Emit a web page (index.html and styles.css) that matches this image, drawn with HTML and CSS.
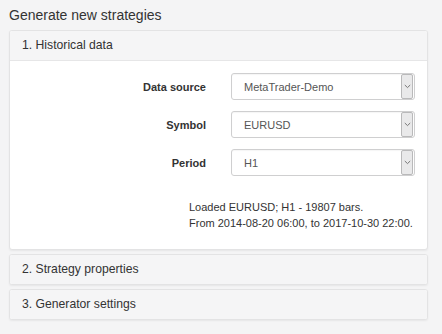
FILE: index.html
```html
<!DOCTYPE html>
<html>
<head>
<meta charset="utf-8">
<link rel="stylesheet" href="styles.css">
</head>
<body>
<div class="page">
  <h1 class="title">Generate new strategies</h1>
  <div class="panel">
    <div class="panel-head">1. Historical data</div>
    <div class="panel-body">
      <div class="form">
        <div class="label">Data source</div>
        <div class="select"><span class="value">MetaTrader-Demo</span><span class="arrow"><svg width="7" height="5" viewBox="0 0 7 5"><path d="M0.8 1 L3.5 3.6 L6.2 1" fill="none" stroke="#777" stroke-width="1"/></svg></span></div>
        <div class="label">Symbol</div>
        <div class="select"><span class="value">EURUSD</span><span class="arrow"><svg width="7" height="5" viewBox="0 0 7 5"><path d="M0.8 1 L3.5 3.6 L6.2 1" fill="none" stroke="#777" stroke-width="1"/></svg></span></div>
        <div class="label">Period</div>
        <div class="select"><span class="value">H1</span><span class="arrow"><svg width="7" height="5" viewBox="0 0 7 5"><path d="M0.8 1 L3.5 3.6 L6.2 1" fill="none" stroke="#777" stroke-width="1"/></svg></span></div>
      </div>
      <div class="info">
        <div>Loaded EURUSD; H1 - 19807 bars.</div>
        <div>From 2014-08-20 06:00, to 2017-10-30 22:00.</div>
      </div>
    </div>
  </div>
  <div class="panel">
    <div class="panel-head closed">2. Strategy properties</div>
  </div>
  <div class="panel">
    <div class="panel-head closed">3. Generator settings</div>
  </div>
</div>
</body>
</html>
```

FILE: styles.css
```css
html, body {
  margin: 0;
  padding: 0;
  background: #f4f4f5;
  font-family: "Liberation Sans", Arial, sans-serif;
  color: #333;
}
.page {
  width: 419px;
  padding: 6px 0 0 9px;
}
.title {
  margin: 0 0 6px 0;
  font-size: 14px;
  font-weight: normal;
  line-height: 18px;
  color: #333;
}
.panel {
  background: #fff;
  border: 1px solid #e3e3e4;
  border-radius: 3px;
  box-shadow: 0 1px 2px rgba(0,0,0,0.06);
  margin-bottom: 4px;
  overflow: hidden;
}
.panel-head {
  background: #f5f5f6;
  border-bottom: 1px solid #e6e6e7;
  height: 29px;
  line-height: 29px;
  padding-left: 12px;
  font-size: 12.2px;
  color: #333;
}
.panel-head.closed {
  border-bottom: none;
  height: 29px;
}
.panel-body {
  padding: 12px 13px 18px 0;
}
.form {
  display: grid;
  grid-template-columns: 196px 184px;
  column-gap: 25px;
  row-gap: 11px;
  align-items: center;
}
.label {
  text-align: right;
  font-weight: bold;
  font-size: 11px;
}
.select {
  height: 25px;
  border: 1px solid #cfcfd0;
  border-radius: 3px;
  display: flex;
  align-items: center;
  justify-content: space-between;
  font-size: 11px;
  color: #555;
  box-shadow: inset 0 1px 1px rgba(0,0,0,0.04);
}
.value {
  padding-left: 12px;
}
.arrow {
  width: 12px;
  height: 25px;
  margin-right: 1px;
  background: #e9e9ea;
  border: 1px solid #b9b9ba;
  border-radius: 2px;
  box-sizing: border-box;
  display: flex;
  align-items: center;
  justify-content: center;
}
.info {
  margin-top: 23px;
  padding-left: 179px;
  font-size: 11px;
  line-height: 16px;
  white-space: nowrap;
  color: #333;
}
```
